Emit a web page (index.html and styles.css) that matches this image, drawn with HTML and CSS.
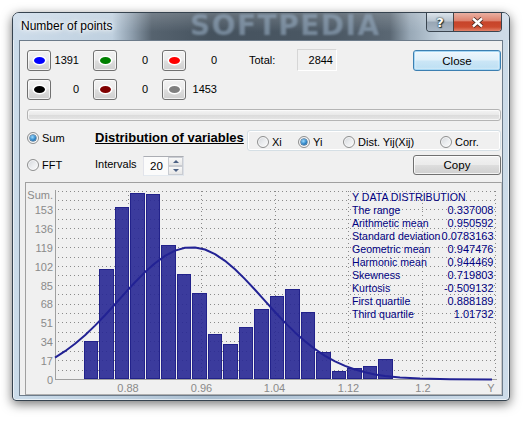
FILE: index.html
```html
<!DOCTYPE html>
<html>
<head>
<meta charset="utf-8">
<title>Number of points</title>
<link rel="stylesheet" href="styles.css">
</head>
<body>
<div class="window">
  <div class="titlebar">
    <span class="title">Number of points</span>
    <span class="watermark">SOFTPEDIA</span>
    <div class="caption-btns">
      <div class="cap help">?</div>
      <div class="cap close">
        <svg width="13" height="11" viewBox="0 0 13 11"><path d="M2 1.5 L11 9.5 M11 1.5 L2 9.5" stroke="#4a2a24" stroke-width="4.2"/><path d="M2 1.5 L11 9.5 M11 1.5 L2 9.5" stroke="#fff" stroke-width="2.4"/></svg>
      </div>
    </div>
  </div>
  <div class="client">
    <div class="row row1">
      <div class="cbtn"><span class="dot c-blue"></span></div><span class="count w42">1391</span>
      <div class="cbtn"><span class="dot c-green"></span></div><span class="count">0</span>
      <div class="cbtn"><span class="dot c-red"></span></div><span class="count">0</span>
      <span class="total-label">Total:</span>
      <span class="total-box">2844</span>
      <div class="btn btn-default push-right">Close</div>
    </div>
    <div class="row row2">
      <div class="cbtn"><span class="dot c-black"></span></div><span class="count w42">0</span>
      <div class="cbtn"><span class="dot c-maroon"></span></div><span class="count">0</span>
      <div class="cbtn"><span class="dot c-gray"></span></div><span class="count">1453</span>
    </div>
    <div class="progress"></div>
    <div class="row rowA">
      <div class="opt opt-main"><span class="radio on"></span><span>Sum</span></div>
      <div class="heading">Distribution of variables</div>
      <div class="group">
        <div class="opt w41"><span class="radio"></span><span>Xi</span></div>
        <div class="opt w45"><span class="radio on"></span><span>Yi</span></div>
        <div class="opt w97"><span class="radio"></span><span>Dist. Yij(Xij)</span></div>
        <div class="opt"><span class="radio"></span><span>Corr.</span></div>
      </div>
    </div>
    <div class="row rowB">
      <div class="opt opt-main"><span class="radio"></span><span>FFT</span></div>
      <span class="intervals">Intervals</span>
      <div class="spin">
        <span class="spin-val">20</span>
        <div class="spin-btns">
          <div class="spin-b"><span class="arr up"></span></div>
          <div class="spin-b"><span class="arr down"></span></div>
        </div>
      </div>
      <div class="btn push-right copy">Copy</div>
    </div>
    <div class="chart">
      <svg class="plot" viewBox="26 183 475 211" width="475" height="211">
        <g stroke="#8a8a8a" stroke-width="1" stroke-dasharray="1 3" shape-rendering="crispEdges">
          <line x1="58" y1="370.5" x2="497" y2="370.5"/>
          <line x1="58" y1="360.5" x2="497" y2="360.5"/>
          <line x1="58" y1="351.5" x2="497" y2="351.5"/>
          <line x1="58" y1="341.5" x2="497" y2="341.5"/>
          <line x1="58" y1="332.5" x2="497" y2="332.5"/>
          <line x1="58" y1="322.5" x2="497" y2="322.5"/>
          <line x1="58" y1="313.5" x2="497" y2="313.5"/>
          <line x1="58" y1="304.5" x2="497" y2="304.5"/>
          <line x1="58" y1="294.5" x2="497" y2="294.5"/>
          <line x1="58" y1="285.5" x2="497" y2="285.5"/>
          <line x1="58" y1="275.5" x2="497" y2="275.5"/>
          <line x1="58" y1="266.5" x2="497" y2="266.5"/>
          <line x1="58" y1="257.5" x2="497" y2="257.5"/>
          <line x1="58" y1="247.5" x2="497" y2="247.5"/>
          <line x1="58" y1="238.5" x2="497" y2="238.5"/>
          <line x1="58" y1="228.5" x2="497" y2="228.5"/>
          <line x1="58" y1="219.5" x2="497" y2="219.5"/>
          <line x1="58" y1="209.5" x2="497" y2="209.5"/>
          <line x1="58" y1="200.5" x2="497" y2="200.5"/>
          <line x1="58" y1="191.5" x2="497" y2="191.5"/>
          <line x1="128.5" y1="191" x2="128.5" y2="379"/>
          <line x1="201.5" y1="191" x2="201.5" y2="379"/>
          <line x1="275.5" y1="191" x2="275.5" y2="379"/>
          <line x1="348.5" y1="191" x2="348.5" y2="379"/>
          <line x1="422.5" y1="191" x2="422.5" y2="379"/>
          <line x1="495.5" y1="191" x2="495.5" y2="379"/>
        </g>
        <g fill="rgb(39,39,147)" fill-opacity="0.9" stroke="#22228a" stroke-width="1" shape-rendering="crispEdges">
          <rect x="84.5" y="341.5" width="13" height="37"/>
          <rect x="99.5" y="269.5" width="14" height="109"/>
          <rect x="115.5" y="207.5" width="13" height="171"/>
          <rect x="130.5" y="193.5" width="14" height="185"/>
          <rect x="146.5" y="194.5" width="13" height="184"/>
          <rect x="161.5" y="245.5" width="14" height="133"/>
          <rect x="177.5" y="274.5" width="13" height="104"/>
          <rect x="192.5" y="293.5" width="14" height="85"/>
          <rect x="208.5" y="334.5" width="13" height="44"/>
          <rect x="223.5" y="344.5" width="14" height="34"/>
          <rect x="239.5" y="327.5" width="13" height="51"/>
          <rect x="254.5" y="309.5" width="14" height="69"/>
          <rect x="270.5" y="296.5" width="13" height="82"/>
          <rect x="285.5" y="289.5" width="14" height="89"/>
          <rect x="301.5" y="312.5" width="13" height="66"/>
          <rect x="316.5" y="352.5" width="14" height="26"/>
          <rect x="332.5" y="371.5" width="13" height="7"/>
          <rect x="347.5" y="368.5" width="14" height="10"/>
          <rect x="363.5" y="366.5" width="13" height="12"/>
          <rect x="378.5" y="359.5" width="14" height="19"/>
        </g>
        <g stroke="#a0a0a0" stroke-width="1" shape-rendering="crispEdges">
          <line x1="55.5" y1="190" x2="55.5" y2="380"/>
          <line x1="55" y1="379.5" x2="497" y2="379.5"/>
        </g>
        <path d="M55,357.6 L65,351.2 L75,343.8 L85,335.2 L95,325.6 L105,315.2 L115,304.3 L125,293.1 L135,282.3 L145,272.1 L155,263.2 L165,255.9 L175,250.6 L185,247.7 L195,247.4 L205,249.5 L215,254.1 L225,260.8 L235,269.3 L245,279.1 L255,289.8 L265,300.9 L275,312 L285,322.6 L295,332.4 L305,341.3 L315,349.1 L325,355.8 L335,361.3 L345,365.9 L355,369.5 L365,372.2 L375,374.4 L385,375.9 L400,377.5 L420,378.6 L450,379.3 L492,379.5" fill="none" stroke="#222294" stroke-width="2" stroke-linejoin="round"/>
        <g class="axis-txt" fill="#8a8a8a" font-size="11" text-anchor="end">
          <text x="53" y="199">Sum.</text>
          <text x="53" y="214">153</text>
          <text x="53" y="233">136</text>
          <text x="53" y="252">119</text>
          <text x="53" y="270.5">102</text>
          <text x="53" y="289.5">85</text>
          <text x="53" y="308">68</text>
          <text x="53" y="327">51</text>
          <text x="53" y="346">34</text>
          <text x="53" y="365">17</text>
          <text x="53" y="384">0</text>
        </g>
        <g class="axis-txt" fill="#8a8a8a" font-size="11" text-anchor="middle">
          <text x="128" y="392">0.88</text>
          <text x="201.5" y="392">0.96</text>
          <text x="274.5" y="392">1.04</text>
          <text x="348.5" y="392">1.12</text>
          <text x="423" y="392">1.2</text>
          <text x="491" y="392">Y</text>
        </g>
        <g class="stats" fill="#000080" font-size="10.6">
          <text x="352" y="200.5">Y DATA DISTRIBUTION</text>
          <text x="352" y="214">The range</text>
          <text x="352" y="227">Arithmetic mean</text>
          <text x="352" y="240">Standard deviation</text>
          <text x="352" y="253">Geometric mean</text>
          <text x="352" y="266">Harmonic  mean</text>
          <text x="352" y="279">Skewness</text>
          <text x="352" y="292">Kurtosis</text>
          <text x="352" y="305">First quartile</text>
          <text x="352" y="318">Third quartile</text>
        </g>
        <g class="stats" fill="#000080" font-size="11" text-anchor="end">
          <text x="493.5" y="214">0.337008</text>
          <text x="493.5" y="227">0.950592</text>
          <text x="493.5" y="240">0.0783163</text>
          <text x="493.5" y="253">0.947476</text>
          <text x="493.5" y="266">0.944469</text>
          <text x="493.5" y="279">0.719803</text>
          <text x="493.5" y="292">-0.509132</text>
          <text x="493.5" y="305">0.888189</text>
          <text x="493.5" y="318">1.01732</text>
        </g>
      </svg>
    </div>
  </div>
</div>
</body>
</html>
```
FILE: styles.css
```css
* { box-sizing: border-box; }
html, body { margin: 0; padding: 0; background: #fff; }
body {
  font-family: "Liberation Sans", Arial, sans-serif;
  font-size: 11px;
  color: #000;
  width: 530px;
  height: 424px;
  overflow: hidden;
}

.window {
  margin: 12px 0 0 12px;
  width: 498px;
  height: 389px;
  border: 1px solid #36434f;
  border-radius: 7px 7px 4px 4px;
  background: linear-gradient(90deg, #cbdcea 0%, #bccede 22%, #a9bdcf 40%, #b8cadb 65%, #cddce9 100%);
  box-shadow: 0 3px 11px rgba(0, 0, 0, .55), inset 0 0 0 1px rgba(255, 255, 255, .6);
  display: flex;
  flex-direction: column;
}

.titlebar {
  position: relative;
  height: 27px;
  display: flex;
  align-items: flex-start;
  border-radius: 6px 6px 0 0;
  background:
    linear-gradient(rgba(255,255,255,.18), rgba(255,255,255,0) 70%),
    linear-gradient(90deg, #cddcea 0%, #bfd0df 20%, #8d9dac 24%, #56636f 28%, #45525e 40%, #4b5864 65%, #5a6773 76%, #98a8b6 80%, #c0cfdc 86%, #cfdce8 100%);
}
.title {
  position: relative;
  z-index: 2;
  margin-left: 8px;
  line-height: 27px;
  font-size: 12px;
  color: #000;
  text-shadow: 0 0 6px #fff, 0 0 3px #fff, 0 0 10px rgba(255,255,255,.8);
}
.watermark {
  position: absolute;
  left: 177px;
  top: 0;
  line-height: 26px;
  font-family: "DejaVu Sans", sans-serif;
  font-weight: bold;
  font-size: 28px;
  letter-spacing: 1.5px;
  color: rgba(150, 172, 194, .6);
  filter: blur(1.2px);
  white-space: nowrap;
}
.caption-btns {
  position: relative;
  z-index: 2;
  margin-left: auto;
  margin-right: 7px;
  display: flex;
  height: 19px;
  border: 1px solid #3a4550;
  border-top: none;
  border-radius: 0 0 4px 4px;
  overflow: hidden;
}
.cap {
  display: flex;
  align-items: center;
  justify-content: center;
  height: 100%;
}
.cap.help {
  width: 27px;
  border-right: 1px solid #4a4444;
  background: linear-gradient(#dbe3ea 0%, #b9c5d0 45%, #98a6b4 50%, #a8b6c4 100%);
  color: #fff;
  font-weight: bold;
  font-size: 13px;
  font-family: "DejaVu Sans", sans-serif;
  text-shadow: 0 0 2px #233, 0 0 1px #233, 1px 1px 1px #233;
}
.cap.close {
  width: 47px;
  background: linear-gradient(#eab0a2 0%, #de8470 42%, #c7442a 50%, #cc4a2e 78%, #e3836a 100%);
}

.client {
  flex: 1;
  margin: 0 6px 4px 6px;
  border: 1px solid #6c7b8a;
  background: #f0f0f0;
  padding: 8px 1px 0 7px;
  display: flex;
  flex-direction: column;
}

.row { display: flex; align-items: flex-start; }
.row1 { height: 22px; }
.row2 { height: 21px; margin-top: 8px; }
.row1 .cbtn, .row1 .count, .row1 .total-label { margin-top: 1px; }

.cbtn {
  width: 24px;
  height: 21px;
  border: 1px solid #707070;
  border-radius: 3px;
  background: linear-gradient(#f2f2f2 0%, #ebebeb 48%, #dddddd 52%, #cfcfcf 100%);
  box-shadow: inset 0 0 0 1px rgba(255,255,255,.7);
  display: flex;
  align-items: center;
  justify-content: center;
}
.dot {
  width: 11px;
  height: 7px;
  border-radius: 50%;
  box-shadow: 0 0 0 1.5px #fff;
}
.c-blue { background: #0000ff; }
.c-green { background: #008000; }
.c-red { background: #ff0000; }
.c-black { background: #000; }
.c-maroon { background: #800000; }
.c-gray { background: #808080; }

.count {
  width: 45px;
  padding-right: 14px;
  text-align: right;
  line-height: 21px;
}
.count.w42 { width: 42px; }

.total-label {
  margin-left: 18px;
  width: 48px;
  line-height: 21px;
}
.total-box {
  width: 40px;
  height: 22px;
  border: 1px solid;
  border-color: #d6d6d6 #fff #fff #d6d6d6;
  text-align: right;
  padding: 3px 3px 0 0;
  line-height: 14px;
}

.btn {
  width: 88px;
  height: 21px;
  border: 1px solid #707070;
  border-radius: 3px;
  background: linear-gradient(#f2f2f2 0%, #ebebeb 48%, #dddddd 52%, #cfcfcf 100%);
  box-shadow: inset 0 0 0 1px rgba(255,255,255,.75);
  display: flex;
  align-items: center;
  justify-content: center;
  font-size: 11.5px;
}
.btn-default {
  margin-top: 1px;
  border-color: #3c7fb1;
  background: linear-gradient(#eef7fd 0%, #dff0fa 48%, #cbe6f6 52%, #bcdff3 100%);
  box-shadow: inset 0 0 0 1px #a6d7f4, inset 0 0 2px 1px rgba(255,255,255,.8);
}
.push-right { margin-left: auto; }
.copy { height: 20px; }

.progress {
  margin-top: 9px;
  height: 12px;
  border: 1px solid #b4b4b4;
  border-radius: 3px;
  background: linear-gradient(#f4f4f4 0%, #e8e8e8 50%, #dcdcdc 55%, #e6e6e6 100%);
  box-shadow: inset 0 0 0 1px rgba(255,255,255,.6);
}

.rowA { margin-top: 9px; height: 21px; }
.rowB { margin-top: 4px; height: 21px; }

.opt {
  display: flex;
  align-items: center;
  line-height: 12px;
  height: 12px;
  white-space: nowrap;
}
.opt-main { width: 68px; margin-top: 2px; }
.rowB .opt-main { margin-top: 4px; }
.opt .radio { margin-right: 3px; }
.w41 { width: 41px; }
.w45 { width: 45px; }
.w97 { width: 97px; }

.radio {
  position: relative;
  flex: none;
  width: 12px;
  height: 12px;
  border-radius: 50%;
  border: 1px solid #8e8f8f;
  background: linear-gradient(135deg, #d3d6da 0%, #eceef0 55%, #fafafa 100%);
  box-shadow: inset 0 0 0 1px rgba(255,255,255,.7);
}
.radio.on::after {
  content: "";
  position: absolute;
  left: 2px;
  top: 2px;
  width: 6px;
  height: 6px;
  border-radius: 50%;
  background: radial-gradient(circle at 40% 35%, #9fdcff 0%, #2f86c8 55%, #0d4c86 100%);
  box-shadow: 0 0 0 0.5px #174a78;
}

.heading {
  width: 152px;
  font-weight: bold;
  font-size: 13px;
  line-height: 16px;
  text-decoration: underline;
  white-space: nowrap;
}
.group {
  width: 254px;
  height: 21px;
  margin-left: auto;
  border: 1px solid #d5dfe5;
  border-radius: 3px;
  box-shadow: inset 0 0 0 1px #fff;
  display: flex;
  align-items: flex-start;
  padding: 5px 0 0 9px;
}

.intervals {
  width: 48px;
  margin-top: 3px;
  line-height: 12px;
}
.spin {
  width: 41px;
  height: 20px;
  margin-top: 1px;
  border: 1px solid;
  border-color: #abadb3 #dbdfe6 #e3e9ef #e2e3ea;
  background: #fbfbfb;
  display: flex;
}
.spin-val {
  width: 24px;
  padding-left: 6px;
  line-height: 18px;
  font-size: 11.5px;
}
.spin-btns {
  width: 15px;
  display: flex;
  flex-direction: column;
}
.spin-b {
  height: 9px;
  border: 1px solid #c9ccd2;
  background: linear-gradient(#f8f8f8, #e6e6e6);
  display: flex;
  align-items: center;
  justify-content: center;
}
.arr { width: 0; height: 0; border-left: 3px solid transparent; border-right: 3px solid transparent; }
.arr.up { border-bottom: 3px solid #4c6184; }
.arr.down { border-top: 3px solid #4c6184; }

.chart {
  margin: 6px -1px 0 -2px;
  height: 213px;
  border: 1px solid;
  border-color: #a0a0a0 #c8c8c8 #b0b0b0 #a0a0a0;
  background: #f0f0f0;
}
.plot {
  display: block;
  width: 475px;
  height: 211px;
  font-family: "Liberation Sans", Arial, sans-serif;
}
```
